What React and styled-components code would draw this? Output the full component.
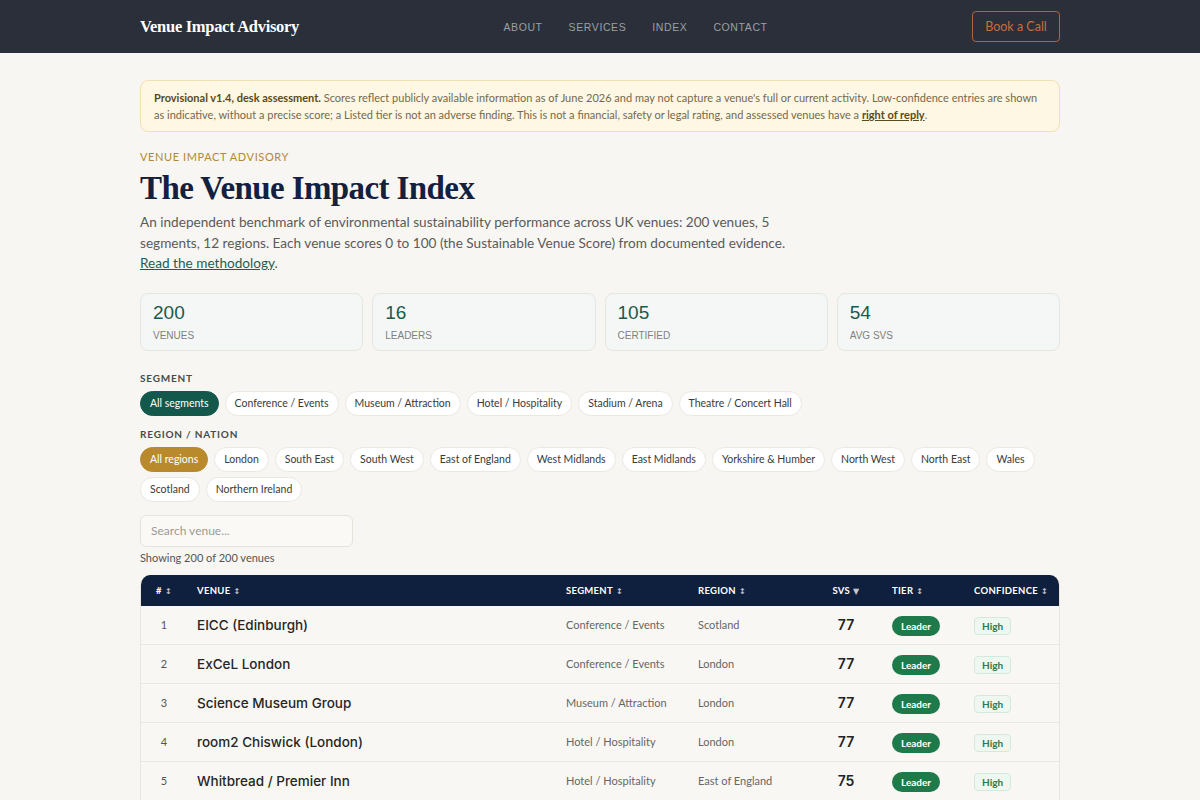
import React from "react";
import styled, { createGlobalStyle } from "styled-components";

const Global = createGlobalStyle`
  html, body { margin: 0; padding: 0; background: #f8f6f2; }
  body { font-family: "Lato", "Noto Sans", sans-serif; color: #2b2b2b; }
  * { box-sizing: border-box; }
`;

const Header = styled.header`
  background: #2b2f39;
  height: 53px;
`;
const Inner = styled.div`
  width: 920px;
  margin: 0 auto;
`;
const HeaderInner = styled(Inner)`
  height: 100%;
  display: flex;
  align-items: center;
  justify-content: space-between;
`;
const Logo = styled.div`
  font-family: "Liberation Serif", serif;
  font-weight: 700;
  font-size: 16.5px;
  letter-spacing: -0.3px;
  color: #ffffff;
`;
const Nav = styled.nav`
  display: flex;
  gap: 26px;
`;
const NavLink = styled.a`
  font-family: "Liberation Sans", sans-serif;
  font-size: 10.5px;
  letter-spacing: 0.6px;
  color: #9b9fa7;
  text-transform: uppercase;
`;
const CallButton = styled.button`
  height: 31px;
  width: 88px;
  border: 1px solid #b5613a;
  border-radius: 4px;
  background: transparent;
  color: #c96c43;
  font-family: "Lato", sans-serif;
  font-size: 12.5px;
`;

const Main = styled(Inner)`
  padding-top: 27px;
  padding-bottom: 40px;
`;
const Notice = styled.div`
  background: #fdf7e3;
  border: 1px solid #f0e1b3;
  border-radius: 8px;
  padding: 8px 13px;
  font-size: 11px;
  line-height: 17px;
  color: #76694c;
  strong { color: #5a4a1c; font-weight: 700; }
  a { color: #5a4a1c; font-weight: 700; text-decoration: underline; }
`;
const Eyebrow = styled.div`
  margin-top: 18px;
  font-size: 11px;
  letter-spacing: 0.6px;
  color: #b5882f;
  text-transform: uppercase;
  line-height: 13px;
`;
const Title = styled.h1`
  margin: 5px 0 0;
  font-family: "Liberation Serif", serif;
  font-weight: 700;
  font-size: 33px;
  letter-spacing: -0.6px;
  line-height: 40px;
  color: #13203f;
`;
const Lede = styled.p`
  margin: 4px 0 0;
  max-width: 652px;
  font-size: 13.6px;
  line-height: 20.5px;
  color: #5a5a5a;
  a { color: #1d5e50; text-decoration: underline; }
`;
const Stats = styled.div`
  margin-top: 19px;
  display: grid;
  grid-template-columns: repeat(4, 1fr);
  gap: 9px;
`;
const StatCard = styled.div`
  height: 58px;
  background: #f5f7f6;
  border: 1px solid #e6e6e1;
  border-radius: 8px;
  padding: 8px 12px;
  font-family: "Liberation Sans", sans-serif;
`;
const StatValue = styled.div`
  font-size: 19px;
  line-height: 22px;
  color: #1a5a4c;
`;
const StatLabel = styled.div`
  margin-top: 6px;
  font-size: 10px;
  color: #808080;
  text-transform: uppercase;
`;
const FilterLabel = styled.div`
  margin-top: ${(p) => p.$mt}px;
  font-size: 10px;
  font-weight: 700;
  letter-spacing: 0.8px;
  color: #4a4a4a;
  text-transform: uppercase;
  line-height: 12px;
`;
const PillRow = styled.div`
  margin-top: 7px;
  display: flex;
  flex-wrap: wrap;
  gap: 5px 6px;
`;
const Pill = styled.button`
  height: 25px;
  padding: 0 9px;
  border-radius: 999px;
  border: 1px solid ${(p) => (p.$bg ? p.$bg : "#ece8e0")};
  background: ${(p) => p.$bg || "#ffffff"};
  color: ${(p) => (p.$bg ? "#ffffff" : "#3a3a3a")};
  font-family: "Lato", sans-serif;
  font-size: 10.5px;
`;
const Search = styled.input`
  display: block;
  margin-top: 13px;
  width: 213px;
  height: 32px;
  border: 1px solid #e7e3db;
  border-radius: 6px;
  background: #faf9f6;
  padding: 0 10px;
  font-family: "Lato", sans-serif;
  font-size: 12px;
  &::placeholder { color: #9a9a9a; }
`;
const Count = styled.div`
  margin-top: 4px;
  font-size: 11px;
  color: #555;
`;
const Table = styled.div`
  margin-top: 11px;
  border: 1px solid #e9e6df;
  border-top: none;
  border-radius: 10px 10px 0 0;
  overflow: hidden;
`;
const cols = "56px 369px 132px 118px 60px 98px 1fr";
const HeadRow = styled.div`
  display: grid;
  grid-template-columns: ${cols};
  align-items: center;
  height: 31px;
  background: #0f1f3e;
  color: #ffffff;
  font-size: 9.5px;
  font-weight: 700;
  letter-spacing: 0.3px;
  text-transform: uppercase;
`;
const Row = styled.div`
  display: grid;
  grid-template-columns: ${cols};
  align-items: center;
  height: 39px;
  background: #f9f7f3;
  border-bottom: 1px solid #ebe8e1;
`;
const Cell = styled.div`
  text-align: ${(p) => p.$align || "left"};
  padding-left: ${(p) => p.$pl || 0}px;
  padding-right: ${(p) => p.$pr || 0}px;
`;
const Sort = styled.span`
  font-family: "DejaVu Sans", sans-serif;
  font-size: 8px;
  opacity: 0.75;
  margin-left: 3px;
`;
const Rank = styled(Cell)`
  font-size: 11px;
  color: #555;
`;
const VenueName = styled(Cell)`
  font-family: "Inter", sans-serif;
  font-size: 13.5px;
  font-weight: 500;
  color: #262626;
`;
const Meta = styled(Cell)`
  font-size: 11px;
  color: #666;
`;
const Score = styled(Cell)`
  font-family: "Inter", sans-serif;
  font-size: 14px;
  font-weight: 600;
  color: #222;
`;
const TierBadge = styled.span`
  display: inline-flex;
  align-items: center;
  justify-content: center;
  height: 20px;
  padding: 0 9px;
  border-radius: 999px;
  background: #1e7a4b;
  color: #fff;
  font-size: 10px;
  font-weight: 700;
`;
const ConfBadge = styled.span`
  display: inline-flex;
  align-items: center;
  justify-content: center;
  height: 18px;
  padding: 0 7px;
  border-radius: 4px;
  background: #eef8f1;
  border: 1px solid #d3eadb;
  color: #2c7a4e;
  font-size: 10px;
  font-weight: 700;
`;

const segments = ["Conference / Events", "Museum / Attraction", "Hotel / Hospitality", "Stadium / Arena", "Theatre / Concert Hall"];
const regions = ["London", "South East", "South West", "East of England", "West Midlands", "East Midlands", "Yorkshire & Humber", "North West", "North East", "Wales", "Scotland", "Northern Ireland"];
const rows = [
  [1, "EICC (Edinburgh)", "Conference / Events", "Scotland", 77],
  [2, "ExCeL London", "Conference / Events", "London", 77],
  [3, "Science Museum Group", "Museum / Attraction", "London", 77],
  [4, "room2 Chiswick (London)", "Hotel / Hospitality", "London", 77],
  [5, "Whitbread / Premier Inn", "Hotel / Hospitality", "East of England", 75],
];

export default function App() {
  return (
    <>
      <Global />
      <Header>
        <HeaderInner>
          <Logo>Venue Impact Advisory</Logo>
          <Nav>
            <NavLink>About</NavLink>
            <NavLink>Services</NavLink>
            <NavLink>Index</NavLink>
            <NavLink>Contact</NavLink>
          </Nav>
          <CallButton>Book a Call</CallButton>
        </HeaderInner>
      </Header>
      <Main>
        <Notice>
          <strong>Provisional v1.4, desk assessment.</strong> Scores reflect publicly available information as of June 2026 and may not capture a venue's full or current activity. Low-confidence entries are shown as indicative, without a precise score; a Listed tier is not an adverse finding. This is not a financial, safety or legal rating, and assessed venues have a <a>right of reply</a>.
        </Notice>
        <Eyebrow>Venue Impact Advisory</Eyebrow>
        <Title>The Venue Impact Index</Title>
        <Lede>
          An independent benchmark of environmental sustainability performance across UK venues: 200 venues, 5 segments, 12 regions. Each venue scores 0 to 100 (the Sustainable Venue Score) from documented evidence. <a>Read the methodology</a>.
        </Lede>
        <Stats>
          {[["200", "Venues"], ["16", "Leaders"], ["105", "Certified"], ["54", "Avg SVS"]].map(([v, l]) => (
            <StatCard key={l}>
              <StatValue>{v}</StatValue>
              <StatLabel>{l}</StatLabel>
            </StatCard>
          ))}
        </Stats>
        <FilterLabel $mt={21}>Segment</FilterLabel>
        <PillRow>
          <Pill $bg="#13584b">All segments</Pill>
          {segments.map((s) => <Pill key={s}>{s}</Pill>)}
        </PillRow>
        <FilterLabel $mt={12}>Region / Nation</FilterLabel>
        <PillRow>
          <Pill $bg="#b88a2c">All regions</Pill>
          {regions.map((s) => <Pill key={s}>{s}</Pill>)}
        </PillRow>
        <Search placeholder="Search venue..." />
        <Count>Showing 200 of 200 venues</Count>
        <Table>
          <HeadRow>
            <Cell $align="center" $pr={10}>#<Sort>↕</Sort></Cell>
            <Cell>Venue<Sort>↕</Sort></Cell>
            <Cell>Segment<Sort>↕</Sort></Cell>
            <Cell>Region<Sort>↕</Sort></Cell>
            <Cell $align="center">SVS<Sort>▼</Sort></Cell>
            <Cell $pl={16}>Tier<Sort>↕</Sort></Cell>
            <Cell>Confidence<Sort>↕</Sort></Cell>
          </HeadRow>
          {rows.map(([n, name, seg, reg, svs]) => (
            <Row key={n}>
              <Rank $align="center" $pr={10}>{n}</Rank>
              <VenueName>{name}</VenueName>
              <Meta>{seg}</Meta>
              <Meta>{reg}</Meta>
              <Score $align="center">{svs}</Score>
              <Cell $pl={16}><TierBadge>Leader</TierBadge></Cell>
              <Cell><ConfBadge>High</ConfBadge></Cell>
            </Row>
          ))}
        </Table>
      </Main>
    </>
  );
}
